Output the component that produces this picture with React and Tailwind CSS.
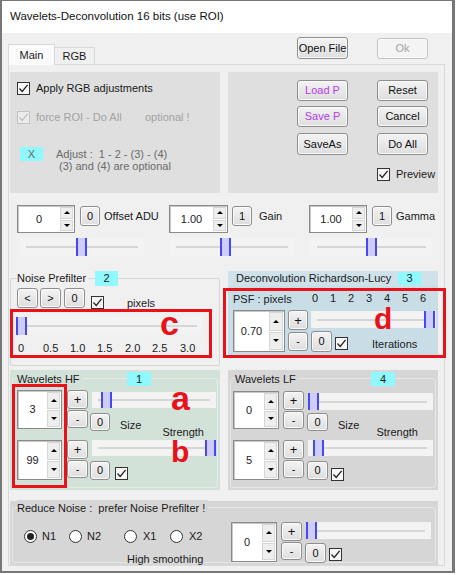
import React from 'react'

const Btn = ({ children, className = '', dim = false, purple = false }) => (
  <div
    className={`flex items-center justify-center rounded-[3px] border bg-linear-to-b shadow-[inset_0_0_0_1px_#fafafa] leading-none ${
      dim ? 'border-[#c4c4c4] from-[#f4f4f4] to-[#f4f4f4] text-[#a3a3a3]' : 'border-[#8e8e8e] from-[#f3f3f3] to-[#dedede]'
    } ${purple ? 'text-[#b53ded]' : dim ? '' : 'text-[#111]'} ${className}`}
  >
    {children}
  </div>
)

const Check = ({ dis = false, className = '' }) => (
  <div
    className={`w-[13px] h-[13px] border flex items-center justify-center shrink-0 ${
      dis ? 'border-[#c2c2c2] bg-[#ececec]' : 'border-[#333] bg-[#f7f7f7]'
    } ${className}`}
  >
    <svg width="11" height="11" viewBox="0 0 11 11">
      <path d="M1.5 5.5 L4.2 8.4 L9.6 1.8" fill="none" stroke={dis ? '#c0c0c0' : '#222'} strokeWidth="1.3" />
    </svg>
  </div>
)

const Radio = ({ on = false }) => (
  <div className="w-[13px] h-[13px] rounded-full border border-[#333] bg-white flex items-center justify-center shrink-0">
    {on && <div className="w-[7px] h-[7px] rounded-full bg-[#222]" />}
  </div>
)

const Tri = ({ up }) =>
  up ? (
    <div className="w-0 h-0 border-x-[3px] border-x-transparent border-b-[3px] border-b-black" />
  ) : (
    <div className="w-0 h-0 border-x-[3px] border-x-transparent border-t-[3px] border-t-black" />
  )

const Spin = ({ value, className = '', arrow = 'w-[14px]' }) => (
  <div className={`flex border border-[#8a8a8a] bg-white shadow-[inset_1px_1px_0_#c8c8c8] ${className}`}>
    <div className="flex-1 flex items-center justify-center text-[#222]">{value}</div>
    <div className={`${arrow} flex flex-col gap-[1px] py-[1px] pr-[1px]`}>
      <div className="flex-1 bg-[#eeeeee] border border-[#d6d6d6] flex items-center justify-center">
        <Tri up />
      </div>
      <div className="flex-1 bg-[#eeeeee] border border-[#d6d6d6] flex items-center justify-center">
        <Tri />
      </div>
    </div>
  </div>
)

const Slider = ({ className = '', thumb = 'left-0' }) => (
  <div className={`relative bg-[#f3f3f3] ${className}`}>
    <div className="absolute left-[6px] right-[6px] top-1/2 h-[2px] -mt-[1px] bg-[#d6d6d6]" />
    <div className={`absolute top-0 bottom-0 w-[11px] bg-[#cdcdff] border-x-2 border-[#4747f5] ${thumb}`} />
  </div>
)

const Cyan = ({ children, className = '' }) => (
  <div className={`bg-[#8ff9ff] flex items-center justify-center leading-none ${className}`}>{children}</div>
)

const PlusMinus = ({ top = 'h-[19px]', bot = 'h-[18px]' }) => (
  <div className="flex flex-col gap-[1px]">
    <Btn className={`w-[21px] ${top} text-[13px]`}>+</Btn>
    <Btn className={`w-[21px] ${bot}`}>-</Btn>
  </div>
)

const redFont = { fontFamily: '"Liberation Sans", Arial, sans-serif' }

export default function App() {
  return (
    <div
      className="relative w-[456px] h-[575px] bg-white overflow-hidden text-[11px] text-[#1a1a1a] whitespace-nowrap"
      style={{ fontFamily: '"Liberation Sans", Arial, sans-serif' }}
    >
      <div className="w-[455px] h-[573px] border-l-2 border-t border-r-[3px] border-b-2 border-[#777] flex flex-col">
        {/* title */}
        <div className="h-[32px] bg-white flex items-center pl-[8px] text-[11.5px] text-[#111]">
          Wavelets-Deconvolution 16 bits (use ROI)
        </div>

        <div className="flex-1 bg-[#f0f0f0] flex flex-col">
          {/* tab strip */}
          <div className="h-[31px] flex items-end pl-[6px]">
            <div className="w-[47px] h-[21px] bg-[#fbfbfb] border border-b-0 border-[#d9d9d9] flex items-center justify-center -mb-[1px] z-10">
              Main
            </div>
            <div className="w-[40px] h-[17px] bg-[#f0f0f0] border border-b-0 border-l-0 border-[#d9d9d9] flex items-center justify-center">
              RGB
            </div>
            <Btn className="self-start mt-[4px] ml-[202px] w-[51px] h-[22px]">Open File</Btn>
            <Btn dim className="self-start mt-[5px] ml-[29px] w-[51px] h-[21px]">Ok</Btn>
          </div>

          {/* tab page */}
          <div className="ml-[6px] w-[437px] h-[502px] border border-[#d9d9d9] bg-[#f0f0f0] pl-[1px] flex flex-col">
            {/* top groups */}
            <div className="mt-[7px] flex gap-[8px]">
              <div className="w-[210px] h-[121px] bg-[#dfdfdf] pl-[7px] pt-[10px]">
                <div className="flex items-center h-[13px] gap-[6px]">
                  <Check />
                  <span>Apply RGB adjustments</span>
                </div>
                <div className="flex items-center h-[13px] mt-[16px] text-[#a2a2a2]">
                  <Check dis />
                  <span className="ml-[6px] w-[109px]">force ROI - Do All</span>
                  <span>optional !</span>
                </div>
                <div className="flex items-start mt-[23px]">
                  <Cyan className="ml-[3px] w-[23px] h-[14px] text-[#666]">X</Cyan>
                  <div className="ml-[13px] mt-[1px] leading-[12px] text-[#6a6a6a] whitespace-pre">
                    <div>Adjust :  1 - 2 - (3) - (4)</div>
                    <div className="pl-[3px]">(3) and (4) are optional</div>
                  </div>
                </div>
              </div>

              <div className="w-[210px] h-[121px] bg-[#dfdfdf] pl-[69px] pt-[8px]">
                <div className="flex gap-[29px]">
                  <Btn purple className="w-[51px] h-[21px]">Load P</Btn>
                  <Btn className="w-[51px] h-[21px]">Reset</Btn>
                </div>
                <div className="flex gap-[29px] mt-[5px]">
                  <Btn purple className="w-[51px] h-[21px]">Save P</Btn>
                  <Btn className="w-[51px] h-[21px]">Cancel</Btn>
                </div>
                <div className="flex gap-[29px] mt-[6px]">
                  <Btn className="w-[51px] h-[22px]">SaveAs</Btn>
                  <Btn className="w-[51px] h-[22px]">Do All</Btn>
                </div>
                <div className="flex items-center gap-[6px] mt-[13px] ml-[80px] h-[13px]">
                  <Check />
                  <span>Preview</span>
                </div>
              </div>
            </div>

            {/* offset / gain / gamma */}
            <div className="mt-[12px] flex pl-[7px]">
              <div className="w-[152px]">
                <div className="flex items-start">
                  <Spin value="0" className="w-[58px] h-[28px]" />
                  <Btn className="ml-[5px] mt-[1px] w-[20px] h-[20px]">0</Btn>
                  <span className="ml-[4px] mt-[1px] leading-[20px]">Offset ADU</span>
                </div>
                <Slider className="mt-[5px] ml-[3px] w-[124px] h-[18px]" thumb="left-[56px]" />
              </div>
              <div className="w-[140px]">
                <div className="flex items-start">
                  <Spin value="1.00" className="w-[59px] h-[28px]" />
                  <Btn className="ml-[4px] mt-[1px] w-[20px] h-[20px]">1</Btn>
                  <span className="ml-[7px] mt-[1px] leading-[20px]">Gain</span>
                </div>
                <Slider className="mt-[5px] ml-[1px] w-[124px] h-[18px]" thumb="left-[50px]" />
              </div>
              <div>
                <div className="flex items-start">
                  <Spin value="1.00" className="w-[58px] h-[28px]" />
                  <Btn className="ml-[5px] mt-[1px] w-[20px] h-[20px]">1</Btn>
                  <span className="ml-[4px] mt-[1px] leading-[20px]">Gamma</span>
                </div>
                <Slider className="mt-[5px] ml-[2px] w-[121px] h-[18px]" thumb="left-[55px]" />
              </div>
            </div>

            {/* noise prefilter / deconvolution */}
            <div className="mt-[15px] flex items-start gap-[8px]">
              <div className="w-[210px] mt-[7px] h-[88px] border border-[#d6d6d6] rounded-[2px]">
                <div className="-mt-[8px] flex items-center h-[15px]">
                  <div className="ml-[6px] w-[78px]">
                    <span className="bg-[#f0f0f0] pr-[2px]">Noise Prefilter</span>
                  </div>
                  <Cyan className="w-[23px] h-[15px]">2</Cyan>
                </div>
                <div className="flex items-start mt-[2px] pl-[6px]">
                  <Btn className="w-[21px] h-[20px]">&lt;</Btn>
                  <Btn className="ml-[2px] w-[21px] h-[20px]">&gt;</Btn>
                  <Btn className="ml-[3px] w-[21px] h-[20px]">0</Btn>
                  <Check className="ml-[6px] mt-[8px]" />
                  <span className="ml-[23px] mt-[8px] leading-[14px]">pixels</span>
                </div>
                <Slider className="mt-[7px] ml-[4px] w-[188px] h-[18px]" thumb="left-[1px]" />
                <div className="mt-[6px] ml-[7px] flex leading-[14px]">
                  <span className="w-[25px]">0</span>
                  <span className="w-[27px]">0.5</span>
                  <span className="w-[27px]">1.0</span>
                  <span className="w-[28px]">1.5</span>
                  <span className="w-[27px]">2.0</span>
                  <span className="w-[28px]">2.5</span>
                  <span>3.0</span>
                </div>
              </div>

              <div className="w-[210px]">
                <div className="h-[15px] bg-[#cfe1e9] flex items-center">
                  <span className="ml-[8px]">Deconvolution Richardson-Lucy</span>
                  <Cyan className="ml-auto mr-[17px] w-[23px] h-[13px]">3</Cyan>
                </div>
                <div className="h-[71px] bg-[#c8dde6]">
                  <div className="h-[24px] flex items-start pt-[5px] pl-[5px] leading-[14px]">
                    <span className="w-[79px] mt-[1px]">PSF : pixels</span>
                    {['0', '1', '2', '3', '4', '5', '6'].map((n) => (
                      <span key={n} className="w-[18px]">
                        {n}
                      </span>
                    ))}
                  </div>
                  <div className="flex items-start pl-[5px]">
                    <Spin value="0.70" className="w-[52px] h-[42px]" arrow="w-[15px]" />
                    <div className="ml-[3px] flex flex-col gap-[2px]">
                      <Btn className="w-[20px] h-[20px] text-[13px]">+</Btn>
                      <Btn className="w-[20px] h-[19px]">-</Btn>
                    </div>
                    <div className="ml-[3px] w-[125px]">
                      <Slider className="mt-[1px] w-[125px] h-[17px]" thumb="left-[113px]" />
                      <div className="flex items-start mt-[3px]">
                        <Btn className="w-[21px] h-[21px]">0</Btn>
                        <Check className="ml-[3px] mt-[6px]" />
                        <span className="ml-[24px] mt-[6px] leading-[14px]">Iterations</span>
                      </div>
                    </div>
                  </div>
                </div>
              </div>
            </div>

            {/* wavelets HF / LF */}
            <div className="mt-[4px] flex gap-[8px]">
              <div className="w-[210px] h-[120px] bg-[#d3e2d9] pt-[8px] px-[2px]">
                <div className="h-[110px] border border-[#e4ece7] rounded-[3px]">
                  <div className="-mt-[7px] flex items-center h-[14px]">
                    <div className="ml-[4px] w-[110px]">
                      <span className="bg-[#d3e2d9] pr-[2px]">Wavelets HF</span>
                    </div>
                    <Cyan className="w-[24px] h-[14px]">1</Cyan>
                  </div>
                  <div className="pl-[4px] mt-[4px] h-[39px] flex items-start">
                    <Spin value="3" className="w-[45px] h-[39px]" />
                    <div className="ml-[5px]">
                      <PlusMinus />
                    </div>
                    <div className="ml-[2px]">
                      <Slider className="mt-[2px] ml-[2px] w-[124px] h-[16px]" thumb="left-[9px]" />
                      <div className="flex items-start mt-[5px]">
                        <Btn className="w-[20px] h-[18px]">0</Btn>
                        <span className="ml-[10px] mt-[5px] leading-[14px]">Size</span>
                        <span className="ml-[21px] mt-[12px] leading-[14px]">Strength</span>
                      </div>
                    </div>
                  </div>
                  <div className="pl-[4px] mt-[11px] flex items-start">
                    <Spin value="99" className="w-[45px] h-[40px]" />
                    <div className="ml-[5px]">
                      <PlusMinus />
                    </div>
                    <div className="ml-[2px]">
                      <Slider className="ml-[2px] w-[124px] h-[16px]" thumb="left-[113px]" />
                      <div className="flex items-start mt-[5px]">
                        <Btn className="w-[20px] h-[19px]">0</Btn>
                        <Check className="ml-[5px] mt-[6px]" />
                      </div>
                    </div>
                  </div>
                </div>
              </div>

              <div className="w-[210px] h-[120px] bg-[#d6d6d6] pt-[8px] px-[2px]">
                <div className="h-[110px] border border-[#e6e6e6] rounded-[3px]">
                  <div className="-mt-[7px] flex items-center h-[14px]">
                    <div className="ml-[4px] w-[136px]">
                      <span className="bg-[#d6d6d6] pr-[2px]">Wavelets LF</span>
                    </div>
                    <Cyan className="w-[24px] h-[14px]">4</Cyan>
                  </div>
                  <div className="pl-[2px] mt-[5px] h-[38px] flex items-start">
                    <Spin value="0" className="w-[46px] h-[38px]" />
                    <div className="ml-[4px]">
                      <PlusMinus />
                    </div>
                    <div className="ml-[3px]">
                      <Slider className="mt-[2px] ml-[1px] w-[125px] h-[17px]" thumb="left-0" />
                      <div className="flex items-start mt-[3px]">
                        <Btn className="w-[21px] h-[18px]">0</Btn>
                        <span className="ml-[10px] mt-[5px] leading-[14px]">Size</span>
                        <span className="ml-[17px] mt-[12px] leading-[14px]">Strength</span>
                      </div>
                    </div>
                  </div>
                  <div className="pl-[2px] mt-[11px] flex items-start">
                    <Spin value="5" className="w-[46px] h-[40px]" />
                    <div className="ml-[4px]">
                      <PlusMinus />
                    </div>
                    <div className="ml-[3px]">
                      <Slider className="ml-[1px] w-[125px] h-[16px]" thumb="left-[5px]" />
                      <div className="flex items-start mt-[5px]">
                        <Btn className="w-[21px] h-[19px]">0</Btn>
                        <Check className="ml-[3px] mt-[7px]" />
                      </div>
                    </div>
                  </div>
                </div>
              </div>
            </div>

            {/* reduce noise */}
            <div className="mt-[11px] w-[428px] h-[64px] bg-[#d6d6d6] pt-[6px] px-[2px]">
              <div className="h-[56px] border border-[#e6e6e6] rounded-[3px]">
                <div className="-mt-[7px] flex items-center h-[14px] ml-[4px]">
                  <span className="bg-[#d6d6d6] pr-[3px] whitespace-pre">Reduce Noise :  prefer Noise Prefilter !</span>
                </div>
                <div className="flex">
                  <div className="w-[218px] pl-[11px]">
                    <div className="mt-[15px] flex items-center h-[13px]">
                      <Radio on />
                      <span className="ml-[5px] w-[27px]">N1</span>
                      <Radio />
                      <span className="ml-[5px] w-[37px]">N2</span>
                      <Radio />
                      <span className="ml-[6px] w-[27px]">X1</span>
                      <Radio />
                      <span className="ml-[6px]">X2</span>
                    </div>
                    <div className="mt-[9px] ml-[103px] leading-[14px]">High smoothing</div>
                  </div>
                  <div className="mt-[7px] flex items-start">
                    <Spin value="0" className="w-[46px] h-[40px]" />
                    <div className="ml-[4px]">
                      <PlusMinus />
                    </div>
                    <div className="ml-[3px]">
                      <Slider className="ml-[1px] w-[125px] h-[17px]" thumb="left-0" />
                      <div className="flex items-start mt-[4px]">
                        <Btn className="w-[21px] h-[20px]">0</Btn>
                        <Check className="ml-[3px] mt-[5px]" />
                      </div>
                    </div>
                  </div>
                </div>
              </div>
            </div>
          </div>
        </div>
      </div>

      {/* red annotation boxes and letters */}
      <div className="absolute left-[10px] top-[309px] w-[202px] h-[49px] border-[3px] border-[#e8121b]" />
      <div className="absolute left-[223px] top-[288px] w-[223px] h-[70px] border-[3px] border-[#e8121b]" />
      <div className="absolute left-[12px] top-[384px] w-[55px] h-[104px] border-[3px] border-[#e8121b]" />
      <div className="absolute left-[160px] top-[306px] text-[34px] font-bold leading-none text-[#e8121b]" style={redFont}>
        c
      </div>
      <div className="absolute left-[374px] top-[304px] text-[30px] font-bold leading-none text-[#e8121b]" style={redFont}>
        d
      </div>
      <div className="absolute left-[171px] top-[381px] text-[34px] font-bold leading-none text-[#e8121b]" style={redFont}>
        a
      </div>
      <div className="absolute left-[171px] top-[437px] text-[30px] font-bold leading-none text-[#e8121b]" style={redFont}>
        b
      </div>
    </div>
  )
}
